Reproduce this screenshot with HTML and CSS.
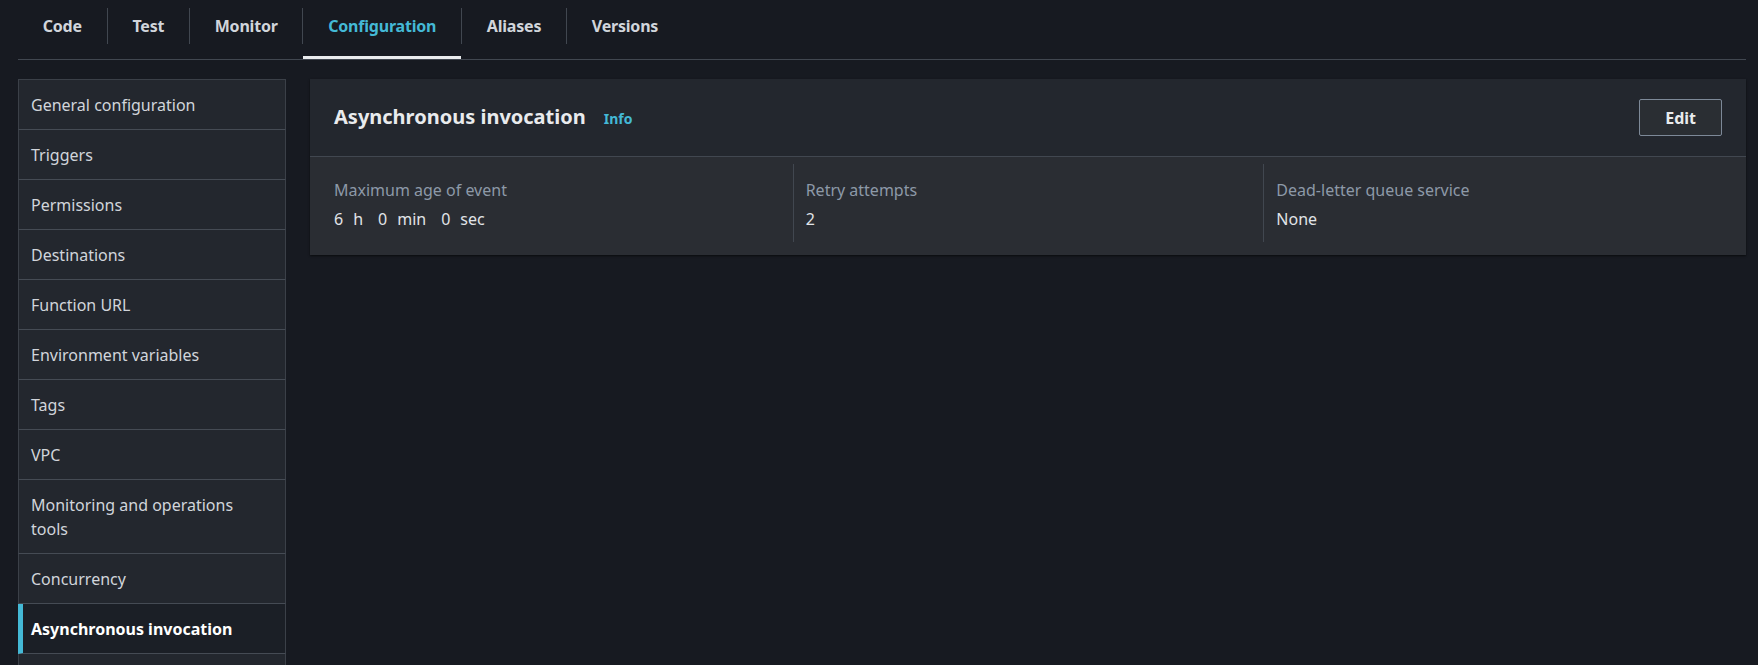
FILE: index.html
```html
<!DOCTYPE html>
<html lang="en">
<head>
<meta charset="utf-8">
<title>Configuration - Asynchronous invocation</title>
<link rel="stylesheet" href="styles.css">
</head>
<body>
<div class="page">
  <nav class="tabs">
    <ul class="tab-list">
      <li class="tab"><a class="tab-link" href="#">Code</a></li>
      <li class="tab"><a class="tab-link" href="#">Test</a></li>
      <li class="tab"><a class="tab-link" href="#">Monitor</a></li>
      <li class="tab"><a class="tab-link active" href="#">Configuration</a></li>
      <li class="tab"><a class="tab-link" href="#">Aliases</a></li>
      <li class="tab"><a class="tab-link" href="#">Versions</a></li>
    </ul>
  </nav>

  <div class="layout">
    <aside class="side-nav">
      <ul class="nav-list">
        <li class="nav-item">General configuration</li>
        <li class="nav-item">Triggers</li>
        <li class="nav-item">Permissions</li>
        <li class="nav-item">Destinations</li>
        <li class="nav-item">Function URL</li>
        <li class="nav-item">Environment variables</li>
        <li class="nav-item">Tags</li>
        <li class="nav-item">VPC</li>
        <li class="nav-item">Monitoring and operations tools</li>
        <li class="nav-item">Concurrency</li>
        <li class="nav-item active">Asynchronous invocation</li>
        <li class="nav-item">Code signing</li>
      </ul>
    </aside>

    <section class="card">
      <header class="card-header">
        <h2 class="card-title">Asynchronous invocation<a class="info" href="#">Info</a></h2>
        <button class="btn" type="button">Edit</button>
      </header>
      <div class="card-body">
        <div class="cols">
          <div class="col">
            <div class="label">Maximum age of event</div>
            <div class="value">
              <span class="grp"><span>6</span><span class="unit">h</span></span><span class="grp"><span>0</span><span class="unit">min</span></span><span class="grp"><span>0</span><span class="unit">sec</span></span>
            </div>
          </div>
          <div class="col">
            <div class="label">Retry attempts</div>
            <div class="value">2</div>
          </div>
          <div class="col">
            <div class="label">Dead-letter queue service</div>
            <div class="value">None</div>
          </div>
        </div>
      </div>
    </section>
  </div>
</div>
</body>
</html>
```

FILE: styles.css
```css
* { box-sizing: border-box; }

html, body {
  margin: 0;
  background: #171a21;
  font-family: "Noto Sans", "Open Sans", sans-serif;
  font-size: 16px;
  color: #d1d5db;
  overflow: hidden;
}

.page {
  padding: 0 12px 0 18px;
}

/* Tabs */
.tabs {
  border-bottom: 1px solid #414750;
}

.tab-list {
  display: flex;
  list-style: none;
  margin: 0;
  padding: 0;
}

.tab {
  display: flex;
  align-items: flex-start;
}

.tab:not(:last-child)::after {
  content: "";
  width: 1px;
  height: 36px;
  margin-top: 8px;
  background: #414750;
}

.tab-link {
  display: block;
  margin-top: 8px;
  height: 51px;
  padding: 0 24.75px;
  line-height: 36px;
  font-size: 16px;
  font-weight: 700;
  letter-spacing: -0.2px;
  color: #d1d5db;
  text-decoration: none;
  border-bottom: 3px solid transparent;
}

.tab-link.active {
  color: #44b9d6;
  border-bottom-color: #e9ebed;
}

/* Layout */
.layout {
  display: flex;
  align-items: flex-start;
  gap: 24px;
  margin-top: 19px;
}

/* Side navigation */
.side-nav {
  flex: none;
  width: 268px;
}

.nav-list {
  list-style: none;
  margin: 0;
  padding: 0;
  border-top: 1px solid #3b4048;
}

.nav-item {
  padding: 13px 12px 12px 12px;
  line-height: 24px;
  font-size: 16px;
  color: #d1d5db;
  background: #23272e;
  border-left: 1px solid #3b4048;
  border-right: 1px solid #3b4048;
  border-bottom: 1px solid #454b54;
}

.nav-item.active {
  background: #1b1f26;
  color: #ffffff;
  font-weight: 700;
  border-left: 5px solid #44b9d6;
  padding-left: 8px;
}

/* Card */
.card {
  flex: 1;
  background: #2a2d33;
  box-shadow: 0 1px 2px rgba(0, 0, 0, 0.6);
}

.card-header {
  display: flex;
  align-items: center;
  justify-content: space-between;
  padding: 20px 24px;
  background: #23272e;
  border-bottom: 1px solid #414750;
}

.card-title {
  display: flex;
  align-items: baseline;
  margin: 0;
  font-size: 20px;
  line-height: 26px;
  font-weight: 700;
  color: #e9ebed;
}

.info {
  margin-left: 18px;
  font-size: 14px;
  font-weight: 700;
  color: #44b9d6;
  text-decoration: none;
}

.btn {
  height: 37px;
  padding: 0 25px;
  border: 1px solid #7d8998;
  border-radius: 2px;
  background: #2a2e33;
  color: #e9ebed;
  font-family: "Noto Sans", "Open Sans", sans-serif;
  font-size: 16px;
  font-weight: 700;
}

.card-body {
  padding: 7px 12px 13px;
}

.cols {
  display: grid;
  grid-template-columns: repeat(3, 1fr);
}

.col {
  padding: 15px 12px 12px;
}

.col + .col {
  border-left: 1px solid #414750;
}

.label {
  line-height: 22px;
  margin-bottom: 7px;
  color: #8d99a8;
}

.value {
  line-height: 22px;
  color: #e1e4e8;
}

.grp + .grp {
  margin-left: 15px;
}

.unit {
  margin-left: 10px;
}
```
